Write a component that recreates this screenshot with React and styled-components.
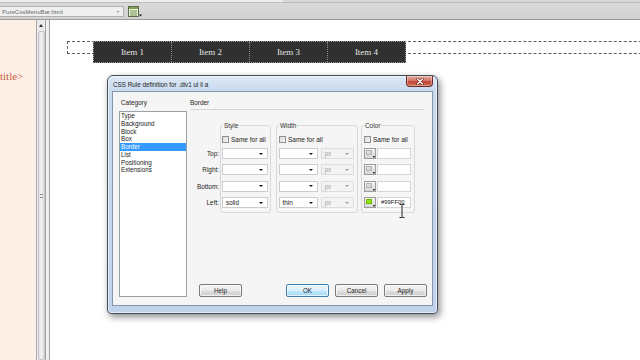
import React from 'react';
import styled, { createGlobalStyle } from 'styled-components';

const Global = createGlobalStyle`
  html, body { margin: 0; padding: 0; width: 640px; height: 360px; overflow: hidden; background: #fff; }
  #root { width: 640px; height: 360px; }
  *, *::before, *::after { box-sizing: border-box; }
`;

const Screen = styled.div`
  width: 640px;
  height: 360px;
  display: flex;
  flex-direction: column;
  overflow: hidden;
  font-family: "Liberation Sans", Arial, sans-serif;
  color: #222;
`;

/* ---------- top toolbar ---------- */
const TopBar = styled.div`
  height: 20px;
  flex: none;
  display: flex;
  flex-direction: column;
  background: linear-gradient(#dadada, #d2d2d2);
  border-bottom: 1px solid #9a9a9a;
`;
const TopStrip = styled.div`
  height: 3px;
  display: flex;
`;
const StripPart = styled.div`
  width: ${p => p.$w}px;
  height: 3px;
  background: ${p => p.$c};
  border-bottom: 1px solid #bdbdbd;
`;
const ToolRow = styled.div`
  display: flex;
  align-items: center;
  padding-top: 3px;
  height: 14px;
`;
const FileField = styled.div`
  width: 125px;
  height: 11px;
  margin-left: -1px;
  background: #efefef;
  border: 1px solid #b2b2b2;
  display: flex;
  align-items: center;
  justify-content: space-between;
  padding: 0 4px 0 2px;
  font-size: 6.1px;
  color: #6a6a6a;
  white-space: nowrap;
`;
const TinyArrow = styled.span`
  width: 0;
  height: 0;
  border-left: 1.5px solid transparent;
  border-right: 1.5px solid transparent;
  border-top: 2px solid ${p => p.$c || '#777'};
`;
const ToolIcon = styled.svg`
  margin-left: 4px;
  flex: none;
`;

/* ---------- main area ---------- */
const Main = styled.div`
  flex: 1;
  display: flex;
  min-height: 0;
`;
const CodePane = styled.div`
  width: 37px;
  flex: none;
  background: #fcefe6;
  border-right: 1px solid #a9a9a9;
  padding-top: 50px;
  overflow: hidden;
`;
const CodeText = styled.div`
  font-family: "Liberation Serif", "Times New Roman", serif;
  font-size: 11px;
  line-height: 12px;
  color: #cc5a3f;
  white-space: nowrap;
`;
const Scrollbar = styled.div`
  width: 9px;
  flex: none;
  background: #ebebee;
  border-right: 1px solid #a4a4a4;
  display: flex;
  flex-direction: column;
  align-items: center;
  padding-top: 4px;
`;
const UpArrow = styled.span`
  width: 0;
  height: 0;
  border-left: 2px solid transparent;
  border-right: 2px solid transparent;
  border-bottom: 3px solid #333;
`;
const Thumb = styled.div`
  margin-top: 4px;
  width: 7px;
  flex: 1;
  background: linear-gradient(to right, #e2e2e6, #f1f1f3, #dcdce0);
  border: 1px solid #c3c3c8;
  border-radius: 2px;
  display: flex;
  align-items: center;
  justify-content: center;
`;
const Grip = styled.span`
  width: 3px;
  height: 4px;
  border-top: 1px solid #888;
  border-bottom: 1px solid #888;
`;
const Gutter = styled.div`
  width: 4px;
  flex: none;
  background: #efefef;
  border-right: 1px solid #a2a2a2;
`;
const Canvas = styled.div`
  flex: 1;
  position: relative;
  background: #fff;
  overflow: hidden;
`;

/* ---------- menu bar in design view ---------- */
const DivBox = styled.div`
  margin: 21px 0 0 17px;
  width: 640px;
  height: 13px;
  border: 1px dashed #5c5c5c;
  border-right: none;
`;
const MenuList = styled.ul`
  list-style: none;
  margin: -1px 0 0 25px;
  padding: 0;
  display: flex;
  width: 313px;
  height: 22px;
  background: #303030;
  border: 1px dotted #9a9a9a;
`;
const MenuItem = styled.li`
  flex: 1;
  display: flex;
  align-items: center;
  justify-content: center;
  border-left: ${p => (p.$first ? 'none' : '1px dotted #8a8a8a')};
  font-family: "Liberation Serif", "Times New Roman", serif;
  font-size: 9px;
  color: #e4e4e4;
`;

/* ---------- dialog window ---------- */
const Dialog = styled.div`
  position: absolute;
  left: 57px;
  top: 55px;
  width: 331px;
  height: 239px;
  display: flex;
  flex-direction: column;
  padding: 0 4px 7px 4px;
  border: 1px solid #434e5b;
  border-radius: 6px 6px 4px 4px;
  background: linear-gradient(180deg, #dde9f6 0px, #c9daee 15px, #c1d3ea 100%);
  box-shadow: inset 0 0 0 1px rgba(255, 255, 255, 0.55), 2px 3px 7px rgba(0, 0, 0, 0.45);
`;
const TitleBar = styled.div`
  height: 15px;
  flex: none;
  display: flex;
  align-items: flex-start;
`;
const Title = styled.div`
  margin-top: 4px;
  padding-left: 1px;
  font-size: 6.3px;
  line-height: 9px;
  color: #1b1b1b;
  white-space: nowrap;
`;
const CloseBtn = styled.div`
  margin-left: auto;
  margin-right: 0;
  width: 27px;
  height: 11px;
  border: 1px solid #6b2c26;
  border-top: none;
  border-radius: 0 0 4px 4px;
  background: linear-gradient(180deg, #e9b0a4 0%, #d5766a 45%, #c4473a 55%, #cf6a52 100%);
  display: flex;
  align-items: center;
  justify-content: center;
  box-shadow: inset 0 0 0 1px rgba(255, 255, 255, 0.35);
`;
const Client = styled.div`
  flex: 1;
  display: flex;
  background: #f5f5f5;
  border: 1px solid #8797ad;
  padding: 6px 5px 8px 6px;
  min-height: 0;
`;
const LeftCol = styled.div`
  width: 68px;
  flex: none;
  display: flex;
  flex-direction: column;
`;
const SectionLabel = styled.div`
  height: 9px;
  line-height: 9px;
  font-size: 6.4px;
  padding-left: ${p => p.$indent || 0}px;
  color: #222;
  white-space: nowrap;
`;
const ListBox = styled.div`
  margin-top: 4px;
  flex: 1;
  background: #fff;
  border: 1px solid #9ba1a9;
`;
const ListItem = styled.div`
  height: 7.75px;
  line-height: 7.75px;
  font-size: 6.3px;
  padding-left: 1px;
  white-space: nowrap;
  background: ${p => (p.$sel ? '#3399ff' : 'transparent')};
  color: ${p => (p.$sel ? '#fff' : '#222')};
`;
const RightCol = styled.div`
  flex: 1;
  margin-left: 3px;
  display: flex;
  flex-direction: column;
  min-width: 0;
`;
const Rule = styled.div`
  margin: 2px 3px 0 0;
  border-top: 1px solid #d6d6d6;
`;
const GroupsRow = styled.div`
  margin-top: 11px;
  display: flex;
  align-items: flex-start;
`;
const LabelsCol = styled.div`
  width: 30px;
  flex: none;
  padding: 27px 1px 0 0;
  display: flex;
  flex-direction: column;
  gap: 5.4px;
`;
const RowLabel = styled.div`
  height: 11px;
  line-height: 11px;
  text-align: right;
  font-size: 6.4px;
  white-space: nowrap;
`;
const Group = styled.fieldset`
  margin: 0 0 0 ${p => p.$ml}px;
  width: ${p => p.$w}px;
  min-width: 0;
  flex: none;
  border: 1px solid #d9d9d9;
  border-radius: 3px;
  padding: 0 ${p => p.$pr}px 4px ${p => p.$pl}px;
`;
const Legend = styled.legend`
  padding: 0 1px;
  margin-left: ${p => p.$ml || 0}px;
  font-size: 6.4px;
  line-height: 9px;
  height: 9px;
  color: #333;
`;
const CheckRow = styled.div`
  margin-top: 5px;
  height: 8px;
  display: flex;
  align-items: center;
  gap: 2px;
  font-size: 6.5px;
  white-space: nowrap;
`;
const CheckBox = styled.span`
  width: 7px;
  height: 7px;
  flex: none;
  border: 1px solid #8e8f8f;
  background: linear-gradient(135deg, #dcdcdc, #f6f6f6);
`;
const Rows = styled.div`
  margin-top: 5px;
  display: flex;
  flex-direction: column;
  gap: 5.4px;
`;
const Row = styled.div`
  height: 11px;
  display: flex;
  gap: ${p => p.$gap || 0}px;
`;
const Select = styled.div`
  width: ${p => p.$w}px;
  height: 11px;
  flex: none;
  display: flex;
  align-items: center;
  justify-content: space-between;
  padding: 0 4px 0 ${p => p.$pl || 3}px;
  background: ${p => (p.$disabled ? '#f3f3f3' : '#fff')};
  border: 1px solid ${p => (p.$disabled ? '#dddddd' : '#cdcdcd')};
  font-size: 6.3px;
  color: ${p => (p.$disabled ? '#a3a3a3' : '#222')};
`;
const SelArrow = styled.span`
  width: 0;
  height: 0;
  border-left: 2px solid transparent;
  border-right: 2px solid transparent;
  border-top: 2.5px solid ${p => (p.$disabled ? '#9c9c9c' : '#111')};
`;
const Swatch = styled.div`
  width: 12px;
  height: 11px;
  flex: none;
  position: relative;
  border: 1px solid #9d9d9d;
  background: linear-gradient(#f4f4f4, #d8d8d8);
  padding: 1px 3px 3px 1px;
`;
const SwatchFill = styled.div`
  width: 100%;
  height: 100%;
  background: ${p => p.$c || 'linear-gradient(135deg, #e6e6e6, #c9c9c9)'};
  border: 1px solid ${p => (p.$c ? '#6fb800' : '#b4b4b4')};
`;
const SwatchArrow = styled.span`
  position: absolute;
  right: 0px;
  bottom: 0px;
  width: 0;
  height: 0;
  border-left: 1.5px solid transparent;
  border-right: 1.5px solid transparent;
  border-top: 2px solid #000;
`;
const ColorInput = styled.div`
  width: 34px;
  height: 11px;
  flex: none;
  background: #fff;
  border: 1px solid #d6d6d6;
  padding-left: 3px;
  font-size: 5.9px;
  line-height: 9px;
  color: #222;
`;
const ButtonRow = styled.div`
  margin-top: auto;
  height: 13px;
  display: flex;
  gap: 6px;
`;
const Button = styled.div`
  width: 43px;
  height: 13px;
  flex: none;
  margin-left: ${p => p.$ml || 0}px;
  display: flex;
  align-items: center;
  justify-content: center;
  font-size: 6.3px;
  color: #1e1e1e;
  border-radius: 2px;
  border: 1px solid ${p => (p.$primary ? '#3c7fb1' : '#7a7a7a')};
  background: ${p =>
    p.$primary
      ? 'linear-gradient(#eaf6fd 0%, #d9f0fc 50%, #bee6fd 51%, #a7d9f5 100%)'
      : 'linear-gradient(#f4f4f4 0%, #ebebeb 50%, #dddddd 51%, #cfcfcf 100%)'};
  box-shadow: inset 0 0 0 1px rgba(255, 255, 255, 0.7);
`;
const Spacer = styled.div`
  flex: 1;
`;
const Cursor = styled.svg`
  position: absolute;
  left: 349px;
  top: 184px;
`;

const categories = ['Type', 'Background', 'Block', 'Box', 'Border', 'List', 'Positioning', 'Extensions'];
const sides = [
  { label: 'Top:', style: '', width: '', color: null, value: '' },
  { label: 'Right:', style: '', width: '', color: null, value: '' },
  { label: 'Bottom:', style: '', width: '', color: null, value: '' },
  { label: 'Left:', style: 'solid', width: 'thin', color: '#93e812', value: '#99FF00' },
];

export default function App() {
  return (
    <>
      <Global />
      <Screen>
        <TopBar>
          <TopStrip>
            <StripPart $w={283} $c="#ececec" />
            <StripPart $w={357} $c="#d8d8d8" />
          </TopStrip>
          <ToolRow>
            <FileField>
              <span>PureCssMenuBar.html</span>
              <TinyArrow />
            </FileField>
            <ToolIcon width="14" height="11" viewBox="0 0 14 11">
              <rect x="0.5" y="0.5" width="10" height="10" fill="#eef2e4" stroke="#5a6a4a" />
              <rect x="1" y="1" width="9" height="2" fill="#7da050" />
              <line x1="2" y1="5" x2="9" y2="5" stroke="#6b8f45" />
              <line x1="2" y1="7" x2="9" y2="7" stroke="#6b8f45" />
              <line x1="2" y1="9" x2="9" y2="9" stroke="#6b8f45" />
              <path d="M11 8.5 L14 8.5 L12.5 10.5 Z" fill="#111" />
            </ToolIcon>
          </ToolRow>
        </TopBar>
        <Main>
          <CodePane>
            <CodeText>title&gt;</CodeText>
          </CodePane>
          <Scrollbar>
            <UpArrow />
            <Thumb>
              <Grip />
            </Thumb>
          </Scrollbar>
          <Gutter />
          <Canvas>
            <DivBox>
              <MenuList>
                {['Item 1', 'Item 2', 'Item 3', 'Item 4'].map((t, i) => (
                  <MenuItem key={t} $first={i === 0}>{t}</MenuItem>
                ))}
              </MenuList>
            </DivBox>

            <Dialog>
              <TitleBar>
                <Title>CSS Rule definition for .div1 ul li a</Title>
                <CloseBtn>
                  <svg width="8" height="7" viewBox="0 0 8 7">
                    <path d="M1.5 1 L6.5 6 M6.5 1 L1.5 6" stroke="#5a1a14" strokeWidth="2.4" strokeLinecap="round" />
                    <path d="M1.5 1 L6.5 6 M6.5 1 L1.5 6" stroke="#ffffff" strokeWidth="1.3" strokeLinecap="round" />
                  </svg>
                </CloseBtn>
              </TitleBar>
              <Client>
                <LeftCol>
                  <SectionLabel $indent={2}>Category</SectionLabel>
                  <ListBox>
                    {categories.map(c => (
                      <ListItem key={c} $sel={c === 'Border'}>{c}</ListItem>
                    ))}
                  </ListBox>
                </LeftCol>
                <RightCol>
                  <SectionLabel>Border</SectionLabel>
                  <Rule />
                  <GroupsRow>
                    <LabelsCol>
                      {sides.map(s => (
                        <RowLabel key={s.label}>{s.label}</RowLabel>
                      ))}
                    </LabelsCol>
                    <Group $ml={0} $w={51} $pl={1} $pr={2}>
                      <Legend $ml={1}>Style</Legend>
                      <CheckRow>
                        <CheckBox />
                        <span>Same for all</span>
                      </CheckRow>
                      <Rows>
                        {sides.map(s => (
                          <Row key={s.label}>
                            <Select $w={46}>
                              <span>{s.style}</span>
                              <SelArrow />
                            </Select>
                          </Row>
                        ))}
                      </Rows>
                    </Group>
                    <Group $ml={5} $w={82} $pl={2} $pr={3}>
                      <Legend>Width</Legend>
                      <CheckRow>
                        <CheckBox />
                        <span>Same for all</span>
                      </CheckRow>
                      <Rows>
                        {sides.map(s => (
                          <Row key={s.label} $gap={2.5}>
                            <Select $w={39} $pl={2.5}>
                              <span>{s.width}</span>
                              <SelArrow />
                            </Select>
                            <Select $w={33} $disabled>
                              <span>px</span>
                              <SelArrow $disabled />
                            </Select>
                          </Row>
                        ))}
                      </Rows>
                    </Group>
                    <Group $ml={3} $w={54} $pl={2} $pr={2}>
                      <Legend>Color</Legend>
                      <CheckRow>
                        <CheckBox />
                        <span>Same for all</span>
                      </CheckRow>
                      <Rows>
                        {sides.map(s => (
                          <Row key={s.label} $gap={1}>
                            <Swatch>
                              <SwatchFill $c={s.color} />
                              <SwatchArrow />
                            </Swatch>
                            <ColorInput>{s.value}</ColorInput>
                          </Row>
                        ))}
                      </Rows>
                    </Group>
                  </GroupsRow>
                  <ButtonRow>
                    <Button $ml={9}>Help</Button>
                    <Spacer />
                    <Button $primary>OK</Button>
                    <Button>Cancel</Button>
                    <Button>Apply</Button>
                  </ButtonRow>
                </RightCol>
              </Client>
            </Dialog>

            <Cursor width="6" height="14" viewBox="0 0 6 14">
              <path d="M0.5 0.5 H2.5 L3 1 L3.5 0.5 H5.5 M3 1 V13 M0.5 13.5 H2.5 L3 13 L3.5 13.5 H5.5" stroke="#222" strokeWidth="1" fill="none" />
            </Cursor>
          </Canvas>
        </Main>
      </Screen>
    </>
  );
}
